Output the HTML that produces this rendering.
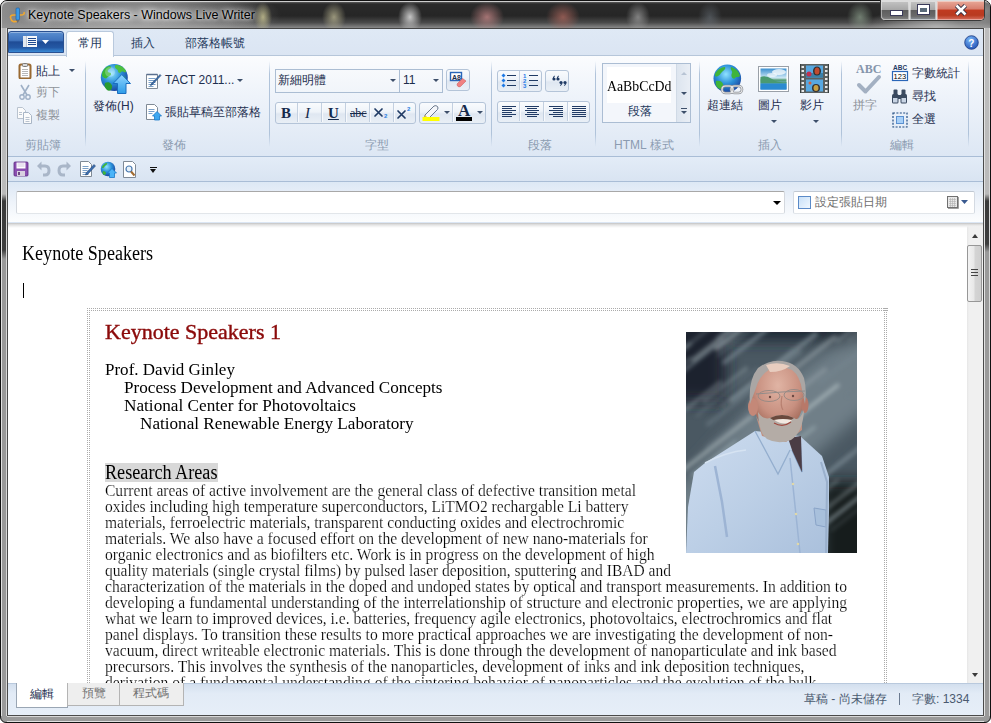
<!DOCTYPE html>
<html><head><meta charset="utf-8">
<style>
*{margin:0;padding:0;box-sizing:border-box}
html,body{width:991px;height:723px;overflow:hidden;background:#fff}
body{position:relative;font-family:"Liberation Sans",sans-serif;font-size:12px;color:#1e395b}
.a{position:absolute}
.ser{font-family:"Liberation Serif",serif}
/* frame */
#frame{left:0;top:0;width:991px;height:723px;border-radius:7px 7px 6px 6px;border:1px solid #111;background:#9a9a9a}
.fside{width:6px;top:28px;height:688px;background:linear-gradient(180deg,#bdbdbd 0,#bababa 166px,#3a3a3a 173px,#3e3e3e 222px,#9a9a9a 231px,#9a9a9a 100%)}
.fside::before{content:"";position:absolute;left:0;top:0;width:1px;height:100%;background:#e2e2e2}
.fside::after{content:"";position:absolute;right:0;top:0;width:1px;height:100%;background:#d8d8d8}
#fbot{left:7px;top:715px;width:977px;height:7px;background:linear-gradient(180deg,#4a4a4a 0,#4a4a4a 1px,#d8d8d8 1px,#d8d8d8 2px,#9a9a9a 2px,#9a9a9a 6px,#e0e0e0 6px)}
#title{left:1px;top:1px;width:989px;height:27px;border-radius:6px 6px 0 0;
 background:
 radial-gradient(9px 15px at 262px 16px,rgba(205,200,150,.8),transparent),
 radial-gradient(12px 15px at 333px 16px,rgba(190,185,150,.75),transparent),
 radial-gradient(12px 15px at 409px 16px,rgba(215,215,215,.9),transparent),
 radial-gradient(17px 15px at 486px 16px,rgba(205,140,140,.75),transparent),
 radial-gradient(17px 15px at 562px 16px,rgba(175,105,95,.75),transparent),
 radial-gradient(12px 15px at 637px 16px,rgba(175,175,175,.65),transparent),
 radial-gradient(12px 15px at 709px 16px,rgba(120,130,140,.45),transparent),
 radial-gradient(13px 15px at 859px 16px,rgba(150,170,150,.65),transparent),
 radial-gradient(70px 22px at 935px 26px,rgba(190,190,190,.8),transparent),
 radial-gradient(30px 30px at 985px 10px,rgba(160,160,160,.8),transparent),
 linear-gradient(90deg,rgba(150,150,150,.9) 0,rgba(150,150,150,.6) 40px,transparent 90px),
 radial-gradient(150px 34px at 130px 14px,rgba(200,200,200,.8),rgba(200,200,200,.3) 70%,transparent),
 linear-gradient(180deg,#c8c8c8 0,#5a5a5a 1px,#2a2a2a 3px,#262626 55%,#4a4a4a 80%,#8a8a8a 100%)}
#ttext{left:28px;top:8px;font-size:12.5px;color:#000;white-space:nowrap;text-shadow:0 0 10px rgba(255,255,255,.9),0 0 6px rgba(255,255,255,.9),0 0 3px rgba(255,255,255,.6)}
#client{left:8px;top:29px;width:975px;height:686px;background:#dbe6f4;border-top:1px solid #3c3c3c}

#tabrow{left:8px;top:29px;width:975px;height:27px;background:linear-gradient(180deg,#dfe9f5,#dbe5f3);border-bottom:1px solid #b6c6da}
#appbtn{left:8px;top:31px;width:56px;height:22px;border-radius:3px 3px 0 0;background:linear-gradient(180deg,#5a8ed0 0,#3f73bd 42%,#1f4c96 50%,#2458a4 78%,#3a8ad6 100%);border:1px solid #2a5192;box-shadow:inset 0 1px 0 rgba(255,255,255,.35)}
#tab1{left:66px;top:31px;width:48px;height:26px;border:1px solid #b9c9dd;border-bottom:none;border-radius:3px 3px 0 0;background:linear-gradient(180deg,#fff,#fbfcfe)}
.tabt{top:35px;font-size:12px;color:#1e395b;white-space:nowrap}
#ribbon{left:8px;top:56px;width:975px;height:101px;background:linear-gradient(180deg,#fbfcfe 0,#eef3fa 40%,#dde7f4 100%);border-bottom:1px solid #a9bdd6}
.sep{width:1px;top:61px;height:86px;background:linear-gradient(180deg,rgba(170,190,215,0),#b0c3da 15%,#b0c3da 85%,rgba(170,190,215,0))}
.glabel{top:137px;font-size:12px;color:#8b9bb0;white-space:nowrap}
#qat{left:8px;top:157px;width:975px;height:25px;background:linear-gradient(180deg,#e3ecf7,#d9e4f2);border-bottom:1px solid #a9bdd6}
#trow{left:8px;top:182px;width:975px;height:40px;background:linear-gradient(180deg,#dde8f5 0,#eef3fa 50%,#fcfdfe 100%)}
#tinput{left:16px;top:191px;width:769px;height:23px;background:#fff;border:1px solid;border-color:#a8a8a8 #d4d8de #e2e6ea #d4d8de;border-radius:2px}
#dbox{left:793px;top:191px;width:182px;height:23px;background:#fff;border:1px solid;border-color:#c0c8d2 #d4dae2 #e2e6ea #d4dae2;border-radius:2px}
#editor{left:8px;top:223px;width:975px;height:460px;background:#fff}
#vscroll{left:967px;top:223px;width:16px;height:460px;background:linear-gradient(90deg,#e6e6e6 0,#f0f0f0 2px,#f0f0f0 100%)}
#bbar{left:8px;top:683px;width:975px;height:32px;background:linear-gradient(180deg,#d3dfee 0,#e2ebf6 30%,#e6eef8 100%);border-top:1px solid #b9c9dd}

.t{position:absolute;font-size:12px;line-height:14px;white-space:nowrap;color:#1e2f4f}
.dis{color:#8e9399}
.arr{position:absolute;width:0;height:0;border-left:3px solid transparent;border-right:3px solid transparent;border-top:3px solid #3d4f6a}

.combo{position:absolute;height:24px;border:1px solid #abbdd3;background:linear-gradient(180deg,#f7f9fc,#f1f5fa)}
.bgrp{position:absolute;height:22px;border:1px solid #b4c4d8;border-radius:3px;background:linear-gradient(180deg,#f9fbfd 0,#eef3f9 45%,#dfe7f1 55%,#e9eff6 100%);overflow:hidden}
.bdiv{position:absolute;top:1px;width:1px;height:19px;background:#c3d0e0;box-shadow:1px 0 0 #f7f9fc}
.btn1{position:absolute;border:1px solid #b4c4d8;border-radius:3px;background:linear-gradient(180deg,#f9fbfd 0,#eef3f9 45%,#dfe7f1 55%,#e9eff6 100%)}

.el{position:absolute;font-family:"Liberation Serif",serif;line-height:1;white-space:nowrap;transform-origin:0 0}
#edclip{left:8px;top:223px;width:959px;height:460px;overflow:hidden;background:#fff}
.dots{background:conic-gradient(from 270deg at 1px 1px,#ababab 25%,transparent 0) 0 0/2px 2px}
</style></head><body>
<div id="frame" class="a"></div><div id="fbot" class="a"></div><div class="a fside" style="left:1px"></div><div class="a fside" style="left:984px;background:linear-gradient(180deg,#bdbdbd 0,#bababa 166px,#3a3a3a 173px,#3e3e3e 216px,#9a9a9a 224px,#9a9a9a 100%)"></div><div class="a" style="left:7px;top:28px;width:1px;height:688px;background:#4a4a4a"></div><div class="a" style="left:983px;top:28px;width:1px;height:688px;background:#4a4a4a"></div>
<div id="title" class="a"></div>
<div class="a" style="left:1px;top:1px;width:989px;height:27px;border-radius:6px 6px 0 0;box-shadow:inset 1px 1px 0 rgba(255,255,255,.55)"></div><div id="ttext" class="a">Keynote Speakers - Windows Live Writer</div>
<div id="client" class="a"></div>

<div id="tabrow" class="a"></div><div class="a" style="left:7px;top:28px;width:977px;height:1px;background:#454545;border-radius:2px 2px 0 0"></div>
<div id="appbtn" class="a"></div>
<div class="a tabt" style="left:131px">插入</div>
<div class="a tabt" style="left:185px">部落格帳號</div>
<div id="ribbon" class="a"></div>
<div id="tab1" class="a"></div>
<div class="a tabt" style="left:78px">常用</div>

<div class="a sep" style="left:85px"></div>
<div class="a sep" style="left:269px"></div>
<div class="a sep" style="left:491px"></div>
<div class="a sep" style="left:595px"></div>
<div class="a sep" style="left:699px"></div>
<div class="a sep" style="left:841px"></div>
<div class="a sep" style="left:968px"></div>
<div class="a glabel" style="left:25px">剪貼簿</div>
<div class="a glabel" style="left:162px">發佈</div>
<div class="a glabel" style="left:365px">字型</div>
<div class="a glabel" style="left:528px">段落</div>
<div class="a glabel" style="left:614px">HTML 樣式</div>
<div class="a glabel" style="left:758px">插入</div>
<div class="a glabel" style="left:890px">編輯</div>
<div id="qat" class="a"></div>
<div id="trow" class="a"></div>
<div id="tinput" class="a"></div>
<div id="dbox" class="a"></div>
<div id="editor" class="a"></div>

<div id="edclip" class="a"><div class="a" style="left:-8px;top:-223px;width:991px;height:723px">
<div class="a" style="left:23px;top:283px;width:1px;height:15px;background:#000"></div>
<div class="a dots" style="left:87px;top:308px;width:801px;height:4px"></div>
<div class="a dots" style="left:87px;top:308px;width:4px;height:400px"></div>
<div class="a dots" style="left:884px;top:308px;width:4px;height:400px"></div>
<div class="a" style="left:105px;top:463px;width:113px;height:19px;background:#d8d8d8"></div>
<!--ED-->
<div class="el" style="left:22.40px;top:242.63px;font-size:20.5px;color:#000;transform:scaleX(0.8824)">Keynote Speakers</div>
<div class="el" style="left:105.20px;top:321.61px;font-size:21px;color:#8b0a0a;transform:scaleX(1.0479);-webkit-text-stroke:0.4px #8b0a0a">Keynote Speakers 1</div>
<div class="el" style="left:104.70px;top:360.68px;font-size:17.7px;color:#000;transform:scaleX(0.9616)">Prof. David Ginley</div>
<div class="el" style="left:124.30px;top:378.78px;font-size:17.7px;color:#000;transform:scaleX(0.9678)">Process Development and Advanced Concepts</div>
<div class="el" style="left:124.30px;top:396.68px;font-size:17.7px;color:#000;transform:scaleX(0.9733)">National Center for Photovoltaics</div>
<div class="el" style="left:140.40px;top:414.68px;font-size:17.7px;color:#000;transform:scaleX(0.9696)">National Renewable Energy Laboratory</div>
<div class="el" style="left:104.50px;top:461.73px;font-size:20.5px;color:#000;transform:scaleX(0.8863)">Research Areas</div>
<div class="el" style="left:104.50px;top:483.40px;font-size:16px;color:#000;transform:scaleX(0.9717);-webkit-text-stroke:0.2px #fff">Current areas of active involvement are the general class of defective transition metal</div>
<div class="el" style="left:104.50px;top:499.35px;font-size:16px;color:#000;transform:scaleX(0.9720);-webkit-text-stroke:0.2px #fff">oxides including high temperature superconductors, LiTMO2 rechargable Li battery</div>
<div class="el" style="left:104.50px;top:515.30px;font-size:16px;color:#000;transform:scaleX(0.9715);-webkit-text-stroke:0.2px #fff">materials, ferroelectric materials, transparent conducting oxides and electrochromic</div>
<div class="el" style="left:104.50px;top:531.25px;font-size:16px;color:#000;transform:scaleX(0.9774);-webkit-text-stroke:0.2px #fff">materials. We also have a focused effort on the development of new nano-materials for</div>
<div class="el" style="left:104.50px;top:547.20px;font-size:16px;color:#000;transform:scaleX(0.9780);-webkit-text-stroke:0.2px #fff">organic electronics and as biofilters etc. Work is in progress on the development of high</div>
<div class="el" style="left:104.50px;top:563.15px;font-size:16px;color:#000;transform:scaleX(0.9701);-webkit-text-stroke:0.2px #fff">quality materials (single crystal films) by pulsed laser deposition, sputtering and IBAD and</div>
<div class="el" style="left:104.50px;top:579.10px;font-size:16px;color:#000;transform:scaleX(0.9766);-webkit-text-stroke:0.2px #fff">characterization of the materials in the doped and undoped states by optical and transport measurements. In addition to</div>
<div class="el" style="left:104.50px;top:595.05px;font-size:16px;color:#000;transform:scaleX(0.9761);-webkit-text-stroke:0.2px #fff">developing a fundamental understanding of the interrelationship of structure and electronic properties, we are applying</div>
<div class="el" style="left:104.50px;top:611.00px;font-size:16px;color:#000;transform:scaleX(0.9743);-webkit-text-stroke:0.2px #fff">what we learn to improved devices, i.e. batteries, frequency agile electronics, photovoltaics, electrochromics and flat</div>
<div class="el" style="left:104.50px;top:626.95px;font-size:16px;color:#000;transform:scaleX(0.9777);-webkit-text-stroke:0.2px #fff">panel displays. To transition these results to more practical approaches we are investigating the development of non-</div>
<div class="el" style="left:104.50px;top:642.90px;font-size:16px;color:#000;transform:scaleX(0.9752);-webkit-text-stroke:0.2px #fff">vacuum, direct writeable electronic materials. This is done through the development of nanoparticulate and ink based</div>
<div class="el" style="left:104.50px;top:658.85px;font-size:16px;color:#000;transform:scaleX(0.9786);-webkit-text-stroke:0.2px #fff">precursors. This involves the synthesis of the nanoparticles, development of inks and ink deposition techniques,</div>
<div class="el" style="left:104.50px;top:674.80px;font-size:16px;color:#000;transform:scaleX(0.9773);-webkit-text-stroke:0.2px #fff">derivation of a fundamental understanding of the sintering behavior of nanoparticles and the evolution of the bulk</div>
<!--/ED-->
<!--IMG--><svg class="a" style="left:686px;top:332px" width="171" height="221" viewBox="0 0 171 221">
<defs>
 <filter id="bl" x="-30%" y="-30%" width="160%" height="160%"><feGaussianBlur stdDeviation="2.2"/></filter>
 <filter id="bl0" x="-30%" y="-30%" width="160%" height="160%"><feGaussianBlur stdDeviation="8"/></filter>
 <filter id="bl3"><feGaussianBlur stdDeviation="0.7"/></filter>
 <filter id="bl4"><feGaussianBlur stdDeviation="1.5"/></filter>
 <linearGradient id="shirt" x1="0" y1="0" x2="1" y2="1"><stop offset="0" stop-color="#cddcef"/><stop offset=".5" stop-color="#bccfe6"/><stop offset="1" stop-color="#aac0dc"/></linearGradient>
 <radialGradient id="skin" cx=".5" cy=".35" r=".6"><stop offset="0" stop-color="#e0b4a4"/><stop offset=".7" stop-color="#c89080"/><stop offset="1" stop-color="#a87060"/></radialGradient>
 <clipPath id="ic"><rect width="171" height="221"/></clipPath>
</defs>
<g clip-path="url(#ic)">
<rect width="171" height="221" fill="#4a5862"/>
<g filter="url(#bl0)">
 <rect x="-20" y="-20" width="210" height="28" fill="#1c2630"/>
 <rect x="-20" y="-20" width="60" height="90" fill="#1a242e"/>
 <path d="M-20 170 L70 70 L140 20 L190 0 L190 70 L120 130 L-20 230z" fill="#6f7f88"/>
 <rect x="135" y="150" width="60" height="90" fill="#141a1f"/>
</g>
<g filter="url(#bl)">
<line x1="-1.8" y1="78.4" x2="34.3" y2="50.2" stroke="#b0bcc0" stroke-width="3.8" stroke-opacity="0.34" stroke-linecap="round"/>
<line x1="174.0" y1="33.1" x2="210.9" y2="4.2" stroke="#7a8a94" stroke-width="2.3" stroke-opacity="0.33" stroke-linecap="round"/>
<line x1="3.8" y1="-8.8" x2="43.1" y2="-39.5" stroke="#8797a0" stroke-width="4.4" stroke-opacity="0.58" stroke-linecap="round"/>
<line x1="28.2" y1="147.1" x2="62.8" y2="120.0" stroke="#8797a0" stroke-width="3.5" stroke-opacity="0.32" stroke-linecap="round"/>
<line x1="113.0" y1="178.7" x2="151.9" y2="148.3" stroke="#a8b6ba" stroke-width="2.0" stroke-opacity="0.55" stroke-linecap="round"/>
<line x1="48.0" y1="166.8" x2="91.4" y2="132.9" stroke="#9aaab0" stroke-width="3.5" stroke-opacity="0.55" stroke-linecap="round"/>
<line x1="-81.8" y1="48.1" x2="-7.4" y2="-10.0" stroke="#7a8a94" stroke-width="2.2" stroke-opacity="0.65" stroke-linecap="round"/>
<line x1="151.0" y1="9.4" x2="198.2" y2="-27.5" stroke="#8797a0" stroke-width="2.8" stroke-opacity="0.61" stroke-linecap="round"/>
<line x1="32.6" y1="23.2" x2="119.3" y2="-44.5" stroke="#6a7a84" stroke-width="3.3" stroke-opacity="0.50" stroke-linecap="round"/>
<line x1="31.0" y1="154.1" x2="72.9" y2="121.4" stroke="#a8b6ba" stroke-width="3.3" stroke-opacity="0.37" stroke-linecap="round"/>
<line x1="-14.5" y1="147.0" x2="65.2" y2="84.7" stroke="#b0bcc0" stroke-width="3.8" stroke-opacity="0.66" stroke-linecap="round"/>
<line x1="102.9" y1="172.3" x2="165.7" y2="123.3" stroke="#7a8a94" stroke-width="2.7" stroke-opacity="0.33" stroke-linecap="round"/>
<line x1="-20.6" y1="11.3" x2="15.0" y2="-16.5" stroke="#6a7a84" stroke-width="3.9" stroke-opacity="0.62" stroke-linecap="round"/>
<line x1="193.2" y1="40.9" x2="242.7" y2="2.3" stroke="#7a8a94" stroke-width="4.4" stroke-opacity="0.70" stroke-linecap="round"/>
<line x1="122.1" y1="-10.2" x2="192.2" y2="-64.9" stroke="#7a8a94" stroke-width="2.7" stroke-opacity="0.33" stroke-linecap="round"/>
<line x1="61.0" y1="187.2" x2="117.2" y2="143.3" stroke="#7a8a94" stroke-width="2.4" stroke-opacity="0.34" stroke-linecap="round"/>
<line x1="65.4" y1="70.5" x2="148.5" y2="5.5" stroke="#b0bcc0" stroke-width="4.6" stroke-opacity="0.43" stroke-linecap="round"/>
<line x1="22.1" y1="92.2" x2="114.0" y2="20.4" stroke="#8797a0" stroke-width="4.6" stroke-opacity="0.34" stroke-linecap="round"/>
<line x1="32.5" y1="-9.7" x2="116.4" y2="-75.3" stroke="#8797a0" stroke-width="1.5" stroke-opacity="0.42" stroke-linecap="round"/>
<line x1="-26.0" y1="-16.3" x2="41.2" y2="-68.8" stroke="#8797a0" stroke-width="2.8" stroke-opacity="0.61" stroke-linecap="round"/>
<line x1="112.7" y1="57.0" x2="147.6" y2="29.7" stroke="#6a7a84" stroke-width="3.9" stroke-opacity="0.66" stroke-linecap="round"/>
<line x1="35.3" y1="73.8" x2="106.8" y2="17.9" stroke="#9aaab0" stroke-width="1.9" stroke-opacity="0.39" stroke-linecap="round"/>
<line x1="145.7" y1="198.0" x2="215.1" y2="143.8" stroke="#9aaab0" stroke-width="1.9" stroke-opacity="0.30" stroke-linecap="round"/>
<line x1="-38.6" y1="45.9" x2="-5.5" y2="20.0" stroke="#8797a0" stroke-width="2.8" stroke-opacity="0.58" stroke-linecap="round"/>
<line x1="-23.6" y1="33.2" x2="30.8" y2="-9.4" stroke="#9aaab0" stroke-width="2.7" stroke-opacity="0.35" stroke-linecap="round"/>
<line x1="162.3" y1="8.5" x2="213.5" y2="-31.4" stroke="#8797a0" stroke-width="3.2" stroke-opacity="0.35" stroke-linecap="round"/>
<line x1="18.4" y1="69.3" x2="60.1" y2="36.8" stroke="#9aaab0" stroke-width="4.4" stroke-opacity="0.39" stroke-linecap="round"/>
<line x1="116.5" y1="209.2" x2="205.7" y2="139.5" stroke="#b0bcc0" stroke-width="3.9" stroke-opacity="0.43" stroke-linecap="round"/>
<line x1="28.8" y1="167.9" x2="93.0" y2="117.7" stroke="#8797a0" stroke-width="4.5" stroke-opacity="0.46" stroke-linecap="round"/>
<line x1="30.7" y1="17.1" x2="102.4" y2="-38.9" stroke="#b0bcc0" stroke-width="3.3" stroke-opacity="0.67" stroke-linecap="round"/>
<line x1="210.3" y1="147.6" x2="293.4" y2="82.7" stroke="#6a7a84" stroke-width="4.3" stroke-opacity="0.66" stroke-linecap="round"/>
<line x1="7.2" y1="27.3" x2="101.1" y2="-46.0" stroke="#a8b6ba" stroke-width="4.1" stroke-opacity="0.51" stroke-linecap="round"/>
<line x1="31.3" y1="6.3" x2="113.8" y2="-58.2" stroke="#6a7a84" stroke-width="2.7" stroke-opacity="0.74" stroke-linecap="round"/>
<line x1="139.2" y1="192.5" x2="185.0" y2="156.7" stroke="#8797a0" stroke-width="2.3" stroke-opacity="0.45" stroke-linecap="round"/>
<line x1="172.4" y1="-1.3" x2="204.1" y2="-26.0" stroke="#6a7a84" stroke-width="3.6" stroke-opacity="0.45" stroke-linecap="round"/>
<line x1="161.8" y1="64.0" x2="217.8" y2="20.3" stroke="#6a7a84" stroke-width="1.9" stroke-opacity="0.64" stroke-linecap="round"/>
<line x1="21.4" y1="115.1" x2="73.8" y2="74.1" stroke="#6a7a84" stroke-width="4.3" stroke-opacity="0.48" stroke-linecap="round"/>
<line x1="146.5" y1="-9.9" x2="188.7" y2="-42.9" stroke="#8797a0" stroke-width="4.0" stroke-opacity="0.31" stroke-linecap="round"/>
<line x1="81.7" y1="108.0" x2="151.8" y2="53.3" stroke="#b0bcc0" stroke-width="3.8" stroke-opacity="0.74" stroke-linecap="round"/>
<line x1="88.4" y1="126.4" x2="128.2" y2="95.3" stroke="#9aaab0" stroke-width="3.4" stroke-opacity="0.66" stroke-linecap="round"/>
<line x1="57.1" y1="175.4" x2="97.4" y2="143.9" stroke="#8797a0" stroke-width="4.1" stroke-opacity="0.67" stroke-linecap="round"/>
<line x1="-9.1" y1="44.0" x2="37.6" y2="7.5" stroke="#b0bcc0" stroke-width="2.5" stroke-opacity="0.45" stroke-linecap="round"/>
<line x1="133.6" y1="51.0" x2="211.8" y2="-10.1" stroke="#7a8a94" stroke-width="1.7" stroke-opacity="0.60" stroke-linecap="round"/>
<line x1="120.9" y1="157.1" x2="207.8" y2="89.2" stroke="#8797a0" stroke-width="4.4" stroke-opacity="0.54" stroke-linecap="round"/>
<line x1="6.2" y1="143.1" x2="49.3" y2="109.5" stroke="#9aaab0" stroke-width="3.0" stroke-opacity="0.65" stroke-linecap="round"/>
<line x1="-34.9" y1="42.5" x2="4.2" y2="11.9" stroke="#9aaab0" stroke-width="3.7" stroke-opacity="0.45" stroke-linecap="round"/>
<line x1="100.8" y1="67.4" x2="139.0" y2="37.5" stroke="#b0bcc0" stroke-width="4.2" stroke-opacity="0.33" stroke-linecap="round"/>
<line x1="-55.5" y1="73.2" x2="4.6" y2="26.3" stroke="#9aaab0" stroke-width="1.8" stroke-opacity="0.64" stroke-linecap="round"/>
<line x1="136.7" y1="179.4" x2="200.1" y2="129.8" stroke="#b0bcc0" stroke-width="3.6" stroke-opacity="0.39" stroke-linecap="round"/>
<line x1="38.4" y1="30.4" x2="101.9" y2="-19.2" stroke="#8797a0" stroke-width="4.3" stroke-opacity="0.61" stroke-linecap="round"/>
<line x1="215.3" y1="105.2" x2="282.1" y2="53.0" stroke="#8797a0" stroke-width="2.4" stroke-opacity="0.68" stroke-linecap="round"/>
<line x1="-39.1" y1="41.2" x2="-3.0" y2="13.0" stroke="#8797a0" stroke-width="3.0" stroke-opacity="0.49" stroke-linecap="round"/>
<line x1="-16.8" y1="50.7" x2="63.7" y2="-12.2" stroke="#6a7a84" stroke-width="1.9" stroke-opacity="0.59" stroke-linecap="round"/>
<line x1="10.8" y1="83.6" x2="71.8" y2="36.0" stroke="#6a7a84" stroke-width="2.0" stroke-opacity="0.73" stroke-linecap="round"/>
<line x1="45.4" y1="68.0" x2="129.4" y2="2.4" stroke="#8797a0" stroke-width="5.0" stroke-opacity="0.62" stroke-linecap="round"/>
</g>
<!-- shirt -->
<g filter="url(#bl3)">
<path d="M69 99 L19 131 L8 140 L2 175 L0 221 L142 221 L143 180 L143 145 L136 124 L114 104 Z" fill="url(#shirt)"/>
<path d="M29 134 L36 170 L41 205" stroke="#9db4d4" stroke-width="2.5" fill="none"/>
<path d="M19 131 Q40 120 60 118" stroke="#d6e3f2" stroke-width="1.5" fill="none"/>
<path d="M69 99 L92 142 L104 118" stroke="#94aece" stroke-width="1.3" fill="none"/>
<path d="M114 104 L116 140 L106 118" stroke="#7f9cc0" stroke-width="1.3" fill="none"/>
<path d="M102 106 L115 104 L116 140 L106 118 Z" fill="#4c3c44"/>
<path d="M104 126 L114 221" stroke="#9cb4d4" stroke-width="1.5" fill="none"/>
<circle cx="107" cy="152" r="1.3" fill="#e0d8a8"/><circle cx="110" cy="182" r="1.3" fill="#e0d8a8"/><circle cx="112" cy="212" r="1.3" fill="#e0d8a8"/>
<path d="M128 176 L140 178 L140 195 L130 193z" fill="#a8c0dc" stroke="#8aa4c8" stroke-width="1"/>
<path d="M135 130 L141 150 L140 221" stroke="#9ab0cc" stroke-width="2" fill="none"/>
</g>
<!-- head -->
<g filter="url(#bl3)">
<path d="M70 84 Q80 104 96 106 Q112 104 116 88 L116 98 L100 110 L76 104z" fill="#c09080"/>
<ellipse cx="92" cy="64" rx="26" ry="35" fill="url(#skin)"/>
<ellipse cx="67" cy="75" rx="5" ry="9" fill="#c48878"/>
<ellipse cx="119" cy="73" rx="3.5" ry="8" fill="#b87868"/>
<path d="M64 72 Q62 48 72 36 Q84 27 96 29 Q112 31 118 46 Q121 58 119 72 L116 58 Q114 44 106 38 Q96 33 86 36 Q74 42 70 56 Z" fill="#aaa6a4"/>
<path d="M80 33 Q92 29 104 34 Q96 40 84 40z" fill="#e8cdbf"/>
<path d="M72 80 Q73 102 81 107 Q92 113 105 108 Q117 100 118 78 Q113 90 108 86 Q96 80 84 86 Q77 88 72 80z" fill="#b4aca6"/>
<path d="M84 86 Q96 80 108 86 Q104 90 96 88 Q88 90 84 86z" fill="#6a4a3e"/>
<path d="M88 88 Q97 86 106 88 Q100 95 88 88z" fill="#f2e8e0"/>
<path d="M88 91 Q97 96 105 90" stroke="#a04a40" stroke-width="1.2" fill="none"/>
<path d="M70 62 L96 60 L119 59" stroke="#8a8a8a" stroke-width=".9" fill="none"/>
<ellipse cx="83" cy="64" rx="11" ry="5.5" fill="none" stroke="#9a8a84" stroke-width="1"/>
<ellipse cx="108" cy="63" rx="10" ry="5.5" fill="none" stroke="#9a8a84" stroke-width="1"/>
<circle cx="84" cy="65" r="1.2" fill="#6a4a44"/><circle cx="107" cy="64" r="1.2" fill="#6a4a44"/>
<path d="M96 64 Q94 74 97 78" stroke="#b88070" stroke-width="1.2" fill="none"/>
</g>
</g>
</svg><!--/IMG-->
</div></div>
<div id="vscroll" class="a"></div><div class="a" style="left:8px;top:223px;width:975px;height:5px;background:linear-gradient(180deg,#bfbfbf 0,#d8d8d8 1px,#efefef 3px,rgba(255,255,255,0) 5px)"></div>
<div id="bbar" class="a"></div>

<!-- clipboard group -->
<svg class="a" style="left:18px;top:63px" width="14" height="16" viewBox="0 0 14 16">
 <rect x="1.5" y="1.5" width="11" height="14" rx="1.5" fill="#f7f7f7" stroke="#9a6a32" stroke-width="2"/>
 <rect x="3" y="4" width="8" height="10" fill="#fff"/>
 <path d="M4 6.5h6M4 8.5h6M4 10.5h6M4 12.5h6" stroke="#b8b8b8" stroke-width="1"/>
 <rect x="4.5" y="0.5" width="5" height="3" rx="1" fill="#d8d8d8" stroke="#7a7a7a" stroke-width="1"/>
</svg>
<div class="t" style="left:36px;top:64px;color:#1b2c4c">貼上</div>
<div class="arr" style="left:69px;top:69px"></div>
<svg class="a" style="left:19px;top:84px" width="12" height="16" viewBox="0 0 12 16">
 <path d="M2 1 L8 11 M10 1 L4 11" stroke="#9fb0c6" stroke-width="1.6" fill="none"/>
 <circle cx="3" cy="13" r="2.2" fill="none" stroke="#9fb0c6" stroke-width="1.4"/>
 <circle cx="9" cy="13" r="2.2" fill="none" stroke="#9fb0c6" stroke-width="1.4"/>
</svg>
<div class="t dis" style="left:36px;top:85px">剪下</div>
<svg class="a" style="left:17px;top:107px" width="16" height="17" viewBox="0 0 16 17">
 <path d="M0.5 0.5h5l3 3v8h-8z" fill="#fbfbfb" stroke="#b9c3cf"/>
 <path d="M6.5 5.5h5l3 3v8h-8z" fill="#fbfbfb" stroke="#a9b6c6"/>
 <path d="M8.5 10.5h4M8.5 12.5h4M8.5 14.5h4M2 5.5h3M2 7.5h3" stroke="#b9c3cf"/>
</svg>
<div class="t dis" style="left:36px;top:108px">複製</div>

<!-- publish group -->
<svg class="a" style="left:99px;top:63px" width="33" height="32" viewBox="0 0 33 32">
 <defs>
  <radialGradient id="gl1" cx="0.4" cy="0.35" r="0.7"><stop offset="0" stop-color="#8fe3ff"/><stop offset="0.5" stop-color="#2a8fd8"/><stop offset="1" stop-color="#1a3f9a"/></radialGradient>
  <linearGradient id="ar1" x1="0" y1="0" x2="0" y2="1"><stop offset="0" stop-color="#8fd4ff"/><stop offset="1" stop-color="#2d9ce8"/></linearGradient>
 </defs>
 <circle cx="15.3" cy="14.5" r="13.5" fill="url(#gl1)"/>
 <path d="M3 12c0-4 3-8 7-9 2 0 3 1 2 2-2 1-4 2-3 4 1 1 3 0 3 2s-3 2-4 4c-1 1-3 0-4-1-1-1-1-1-1-2z" fill="#3cb838"/>
 <path d="M6 20c2-1 5-1 6 1 2 2 1 4 0 6-1 1-3 1-4 0-2-2-3-4-2-7z" fill="#2a9a30"/>
 <path d="M17 2c4 0 8 2 10 6 0 1-1 2-2 1-2-1-3 0-4 1-1 0-2-1-2-2 0-2-3-2-3-4 0-1 0-2 1-2z" fill="#4cc040"/>
 <path d="M24 13c1 0 3 1 3 3-1 1-2 1-3 0z" fill="#3cb838"/>
 <circle cx="11" cy="9" r="5" fill="#fff" opacity=".25"/>
 <path d="M22.8 11.5 L31.5 20.5 H27 V30.5 H18.5 V20.5 H14 Z" fill="url(#ar1)" stroke="#1a6ec0" stroke-width="1"/>
</svg>
<div class="t" style="left:93px;top:99px">發佈(H)</div>
<svg class="a" style="left:145px;top:72px" width="17" height="18" viewBox="0 0 17 18">
 <path d="M1.5 2.5h11v14h-11z" fill="#fff" stroke="#7f8a96"/>
 <path d="M1.5 2.5h11" stroke="#5a7090" stroke-width="1.5"/>
 <path d="M3.5 6.5h7M3.5 8.5h7M3.5 10.5h7M3.5 12.5h7M3.5 14.5h5" stroke="#7aa0c8"/>
 <path d="M6 12 L15 2.5 L16 3.5 L7 13 L5.5 13.5z" fill="#3a6eb0" stroke="#2a4a70" stroke-width=".6"/>
</svg>
<div class="t" style="left:165px;top:73px">TACT 2011...</div>
<div class="arr" style="left:237px;top:79px"></div>
<svg class="a" style="left:145px;top:103px" width="17" height="18" viewBox="0 0 17 18">
 <path d="M1.5 1.5h8l3 3v12h-11z" fill="#fff" stroke="#7f8a96"/>
 <path d="M3.5 6.5h6M3.5 8.5h6M3.5 10.5h4" stroke="#7aa0c8"/>
 <path d="M12 8.5 L16.5 13 H14.5 V17 H9.5 V13 H7.5 Z" fill="#3fa8f0" stroke="#1a78c8" stroke-width=".8"/>
</svg>
<div class="t" style="left:165px;top:105px">張貼草稿至部落格</div>

<!-- font group -->
<div class="combo" style="left:275px;top:69px;width:125px"></div>
<div class="combo" style="left:399px;top:69px;width:44px"></div>
<div class="t" style="left:278px;top:73px;color:#1b2c4c">新細明體</div>
<div class="arr" style="left:390px;top:79px"></div>
<div class="t" style="left:403px;top:73px;color:#1b2c4c">11</div>
<div class="arr" style="left:433px;top:79px"></div>
<div class="btn1" style="left:446px;top:69px;width:24px;height:22px"></div>
<svg class="a" style="left:449px;top:71px" width="18" height="17" viewBox="0 0 18 17">
 <rect x="1.5" y="1.5" width="11" height="8" fill="#fff" stroke="#2a66b8" stroke-width="1.4"/>
 <text x="3" y="8.5" font-family="Liberation Sans" font-size="7" font-weight="bold" fill="#1b2c4c">A8</text>
 <path d="M8 13 L13.5 7.5 L17 10 L11.5 15.5 Q10 16.5 8.5 15z" fill="#f08080" stroke="#d06060" stroke-width=".6"/>
</svg>
<div class="bgrp" style="left:275px;top:102px;width:141px"></div>
<div class="bdiv" style="left:297px;top:103px"></div>
<div class="bdiv" style="left:321px;top:103px"></div>
<div class="bdiv" style="left:345px;top:103px"></div>
<div class="bdiv" style="left:369px;top:103px"></div>
<div class="bdiv" style="left:393px;top:103px"></div>
<div class="t ser" style="left:281px;top:105px;font-size:15px;line-height:16px;font-weight:bold;color:#15294b">B</div>
<div class="t ser" style="left:305px;top:105px;font-size:15px;line-height:16px;font-style:italic;color:#15294b">I</div>
<div class="t ser" style="left:328px;top:105px;font-size:15px;line-height:16px;font-weight:bold;color:#15294b;text-decoration:underline">U</div>
<div class="t ser" style="left:350px;top:106px;font-size:12px;line-height:14px;color:#15294b;text-decoration:line-through">abc</div>
<svg class="a" style="left:373px;top:105px" width="18" height="16" viewBox="0 0 18 16">
 <path d="M2 4 L9 11 M9 4 L2 11" stroke="#1f3a64" stroke-width="1.7" stroke-linecap="round"/>
 <text x="11" y="13" font-family="Liberation Sans" font-size="6" font-weight="bold" fill="#2a7de0">2</text>
</svg>
<svg class="a" style="left:396px;top:104px" width="18" height="16" viewBox="0 0 18 16">
 <path d="M2 7 L9 14 M9 7 L2 14" stroke="#1f3a64" stroke-width="1.7" stroke-linecap="round"/>
 <text x="11" y="7" font-family="Liberation Sans" font-size="6" font-weight="bold" fill="#2a7de0">2</text>
</svg>
<div class="bgrp" style="left:419px;top:102px;width:67px"></div>
<div class="bdiv" style="left:452px;top:103px"></div>
<svg class="a" style="left:421px;top:104px" width="20" height="18" viewBox="0 0 20 18">
 <path d="M4 11 L13 2 Q15 1 16.5 2.5 Q17.5 4 16.5 5.5 L7.5 14.5 L3.5 15z" fill="#f4f6fa" stroke="#5a6a80" stroke-width=".9"/>
 <path d="M4 11 L7.5 14.5 L3 15.5z" fill="#e8c040"/>
 <rect x="1.5" y="13" width="17" height="4" fill="#ffff00"/>
</svg>
<div class="arr" style="left:444px;top:111px"></div>
<div class="t ser" style="left:458px;top:103px;font-size:17px;line-height:16px;font-weight:bold;color:#15294b">A</div>
<div class="a" style="left:456px;top:117px;width:16px;height:4px;background:#000"></div>
<div class="arr" style="left:477px;top:111px"></div>

<!-- paragraph group -->
<div class="bgrp" style="left:497px;top:70px;width:45px"></div>
<div class="bdiv" style="left:519px;top:71px"></div>
<div class="btn1" style="left:545px;top:70px;width:24px;height:22px"></div>
<svg class="a" style="left:497px;top:70px" width="72" height="22" viewBox="0 0 72 22">
 <g fill="#1e7ae6"><path d="M6.5 3.5l2 2-2 2-2-2z"/><path d="M6.5 8.5l2 2-2 2-2-2z"/><path d="M6.5 13.5l2 2-2 2-2-2z"/></g>
 <path d="M10 5.5h9M10 10.5h9M10 15.5h9M32 5.5h9M32 10.5h9M32 15.5h9" stroke="#1f3a64" stroke-width="1"/>
 <text x="26" y="8" font-family="Liberation Sans" font-size="6" font-weight="bold" fill="#1e7ae6">1</text>
 <text x="26" y="13" font-family="Liberation Sans" font-size="6" font-weight="bold" fill="#1e7ae6">2</text>
 <text x="26" y="18" font-family="Liberation Sans" font-size="6" font-weight="bold" fill="#1e7ae6">3</text>
 <g fill="#1f3a64">
  <circle cx="57" cy="9" r="1.6"/><path d="M55.6 8.5 Q56 6 58 5.6 L58 6.3 Q57 6.8 56.9 8z"/>
  <circle cx="61" cy="9" r="1.6"/><path d="M59.6 8.5 Q60 6 62 5.6 L62 6.3 Q61 6.8 60.9 8z"/>
  <circle cx="64" cy="12.5" r="1.6"/><path d="M65.4 13 Q65 15.5 63 15.9 L63 15.2 Q64 14.7 64.1 13.5z"/>
  <circle cx="68" cy="12.5" r="1.6"/><path d="M69.4 13 Q69 15.5 67 15.9 L67 15.2 Q68 14.7 68.1 13.5z"/>
 </g>
</svg>
<div class="bgrp" style="left:497px;top:101px;width:93px"></div>
<div class="bdiv" style="left:519px;top:102px"></div>
<div class="bdiv" style="left:543px;top:102px"></div>
<div class="bdiv" style="left:567px;top:102px"></div>
<svg class="a" style="left:497px;top:101px" width="93" height="22" viewBox="0 0 93 22">
 <g stroke="#1f3a64" stroke-width="1">
 <path d="M5 5.5h14M5 7.5h10M5 9.5h14M5 11.5h10M5 13.5h14M5 15.5h10"/>
 <path d="M28 5.5h14M30 7.5h10M28 9.5h14M30 11.5h10M28 13.5h14M30 15.5h10"/>
 <path d="M52 5.5h14M56 7.5h10M52 9.5h14M56 11.5h10M52 13.5h14M56 15.5h10"/>
 <path d="M75 5.5h14M75 7.5h14M75 9.5h14M75 11.5h14M75 13.5h14M75 15.5h14"/>
 </g>
</svg>

<!-- style gallery -->
<div class="a" style="left:602px;top:63px;width:89px;height:60px;border:1px solid #abbdd3;background:#f3f6fb"></div>
<div class="a" style="left:607px;top:67px;width:64px;height:36px;background:#fff"></div>
<div class="t ser" style="left:607px;top:78px;font-size:15px;line-height:16px;color:#000;transform:scaleX(0.92);transform-origin:0 0">AaBbCcDd</div>
<div class="t" style="left:628px;top:104px;color:#1e395b">段落</div>
<div class="a" style="left:676px;top:64px;width:14px;height:58px;background:linear-gradient(90deg,#dde5ef,#e9eef5);border-left:1px solid #d0dae6"></div>
<div class="a" style="left:681px;top:72px;width:0;height:0;border-left:3px solid transparent;border-right:3px solid transparent;border-bottom:3px solid #b8c4d4"></div>
<div class="arr" style="left:681px;top:92px"></div>
<div class="a" style="left:681px;top:108px;width:6px;height:1px;background:#3d4f6a"></div>
<div class="arr" style="left:681px;top:111px"></div>

<!-- insert group -->
<svg class="a" style="left:712px;top:64px" width="33" height="31" viewBox="0 0 33 31">
 <defs>
  <radialGradient id="gl2" cx="0.45" cy="0.35" r="0.7"><stop offset="0" stop-color="#8fe3ff"/><stop offset="0.5" stop-color="#2a8fd8"/><stop offset="1" stop-color="#1a3f9a"/></radialGradient>
 </defs>
 <circle cx="15.3" cy="14.4" r="13.8" fill="url(#gl2)"/>
 <path d="M3 10c2-4 6-7 10-7 1 2-1 3-3 5s-2 3-4 4-3 1-3-2zM4 17c3-1 6 0 7 3s-1 5-3 5c-3-1-5-4-4-8zM19 3c4 1 8 4 9 9-2 2-4 0-5 2s-5-1-3-5c1-2-2-3-1-6z" fill="#3fb43a"/>
 <g fill="none" stroke="#8a8f96" stroke-width="2.6"><rect x="10" y="22" width="11" height="7" rx="3.5"/><rect x="19" y="22" width="11" height="7" rx="3.5"/></g>
 <g fill="none" stroke="#e8e8e8" stroke-width="1.2"><rect x="10" y="22" width="11" height="7" rx="3.5"/><rect x="19" y="22" width="11" height="7" rx="3.5"/></g>
</svg>
<div class="t" style="left:707px;top:98px">超連結</div>
<svg class="a" style="left:758px;top:66px" width="31" height="26" viewBox="0 0 31 26">
 <defs>
  <linearGradient id="sky" x1="0" y1="0" x2="0" y2="1"><stop offset="0" stop-color="#3a8fd0"/><stop offset=".45" stop-color="#cfe8f5"/><stop offset=".55" stop-color="#4f9a70"/><stop offset=".7" stop-color="#6fb0c8"/><stop offset="1" stop-color="#1a7ac8"/></linearGradient>
 </defs>
 <rect x="0.5" y="0.5" width="30" height="25" fill="#fff" stroke="#9aa0a8"/>
 <rect x="2.5" y="2.5" width="26" height="21" fill="url(#sky)"/>
 <ellipse cx="21" cy="6" rx="7" ry="3" fill="#fff" opacity=".75"/>
 <ellipse cx="14" cy="9" rx="5" ry="2" fill="#fff" opacity=".6"/>
 <path d="M2.5 11 Q8 9 14 13 T28.5 16 V17.5 H2.5z" fill="#4a9a70"/>
 <rect x="2.5" y="17.5" width="26" height="6" fill="#2a8ad0"/>
</svg>
<div class="t" style="left:758px;top:98px">圖片</div>
<div class="arr" style="left:771px;top:120px"></div>
<svg class="a" style="left:800px;top:64px" width="29" height="29" viewBox="0 0 29 29">
 <rect x="0" y="0" width="29" height="29" fill="#3a4040"/>
 <rect x="1" y="0" width="27" height="29" fill="#5a6060"/>
 <rect x="6" y="1.5" width="17" height="12" fill="#58a8e0"/>
 <rect x="6" y="15.5" width="17" height="12" fill="#58a8e0"/>
 <rect x="6" y="9" width="17" height="4.5" fill="#3a80a8"/>
 <ellipse cx="17" cy="7" rx="4" ry="4.5" fill="#303030"/><ellipse cx="17" cy="7" rx="2.5" ry="3.5" fill="#c04a30"/>
 <circle cx="9" cy="10" r="2.5" fill="#c03050"/>
 <ellipse cx="16" cy="24" rx="4" ry="4" fill="#383030"/><ellipse cx="16" cy="24" rx="2.5" ry="3" fill="#c8a040"/>
 <circle cx="10" cy="19" r="1.5" fill="#d06040"/>
 <g fill="#e8e8e8"><rect x="1.5" y="2" width="2.5" height="2"/><rect x="1.5" y="6" width="2.5" height="2"/><rect x="1.5" y="10" width="2.5" height="2"/><rect x="1.5" y="14" width="2.5" height="2"/><rect x="1.5" y="18" width="2.5" height="2"/><rect x="1.5" y="22" width="2.5" height="2"/><rect x="1.5" y="26" width="2.5" height="2"/>
 <rect x="25" y="2" width="2.5" height="2"/><rect x="25" y="6" width="2.5" height="2"/><rect x="25" y="10" width="2.5" height="2"/><rect x="25" y="14" width="2.5" height="2"/><rect x="25" y="18" width="2.5" height="2"/><rect x="25" y="22" width="2.5" height="2"/><rect x="25" y="26" width="2.5" height="2"/></g>
</svg>
<div class="t" style="left:800px;top:98px">影片</div>
<div class="arr" style="left:813px;top:120px"></div>

<!-- edit group -->
<div class="t ser" style="left:856px;top:63px;font-size:12px;line-height:13px;font-weight:bold;color:#8595ab">ABC</div>
<svg class="a" style="left:856px;top:74px" width="26" height="21" viewBox="0 0 26 21">
 <path d="M3 11 L9.5 17.5 L23 3" fill="none" stroke="#a3b0c2" stroke-width="4" stroke-linecap="round" stroke-linejoin="round"/>
</svg>
<div class="t dis" style="left:853px;top:98px">拼字</div>
<svg class="a" style="left:891px;top:64px" width="18" height="18" viewBox="0 0 18 18">
 <text x="2" y="6" font-family="Liberation Sans" font-size="6.5" font-weight="bold" fill="#1f3a64">ABC</text>
 <rect x="1.5" y="7.5" width="15" height="9" fill="#fff" stroke="#2a66b8" stroke-width="1.2"/>
 <text x="2.6" y="15" font-family="Liberation Sans" font-size="7.5" fill="#000">123</text>
</svg>
<div class="t" style="left:912px;top:66px">字數統計</div>
<svg class="a" style="left:891px;top:89px" width="17" height="15" viewBox="0 0 17 15">
 <g fill="#3a4a60"><rect x="1" y="5" width="6.5" height="9.5" rx="1.5"/><rect x="9.5" y="5" width="6.5" height="9.5" rx="1.5"/><rect x="2.5" y="0.5" width="4" height="6" rx="1"/><rect x="10.5" y="0.5" width="4" height="6" rx="1"/><rect x="6" y="6" width="5" height="4"/></g>
 <g fill="#c8d4e4"><rect x="2" y="9" width="4.5" height="4.5"/><rect x="10.5" y="9" width="4.5" height="4.5"/></g>
</svg>
<div class="t" style="left:912px;top:89px">尋找</div>
<svg class="a" style="left:892px;top:112px" width="16" height="16" viewBox="0 0 16 16">
 <rect x="1" y="1" width="14" height="14" fill="none" stroke="#1f4a80" stroke-width="1.2" stroke-dasharray="2 1.4"/>
 <rect x="4.5" y="4.5" width="7" height="7" fill="#a8d0f8" stroke="#5a90d0" stroke-width="1"/>
</svg>
<div class="t" style="left:912px;top:112px">全選</div>

<!-- QAT -->
<svg class="a" style="left:13px;top:161px" width="16" height="16" viewBox="0 0 16 16">
 <rect x="1" y="1" width="14" height="14" rx="1" fill="#8a4fb0" stroke="#5a2a80" stroke-width=".8"/>
 <rect x="3.5" y="1.5" width="9" height="6" fill="#fff"/>
 <path d="M4.5 3h7M4.5 5h7" stroke="#c8b8d8" stroke-width=".8"/>
 <rect x="4" y="10" width="8" height="5" fill="#d8d0e0"/>
 <rect x="5" y="11" width="2" height="3" fill="#6a4a80"/>
</svg>
<svg class="a" style="left:36px;top:161px" width="15" height="16" viewBox="0 0 15 16">
 <path d="M4 5 H9 Q13 5 13 9.5 Q13 14 9 14 H7" fill="none" stroke="#a9b6c8" stroke-width="3"/>
 <path d="M1 5 L5.5 0.5 V9.5z" fill="#a9b6c8"/>
</svg>
<svg class="a" style="left:57px;top:161px" width="15" height="16" viewBox="0 0 15 16">
 <path d="M11 5 H6 Q2 5 2 9.5 Q2 14 6 14 H8" fill="none" stroke="#a9b6c8" stroke-width="3"/>
 <path d="M14 5 L9.5 0.5 V9.5z" fill="#a9b6c8"/>
</svg>
<svg class="a" style="left:80px;top:161px" width="16" height="16" viewBox="0 0 16 16">
 <path d="M0.5 0.5h8l3 3v12h-11z" fill="#fff" stroke="#7f8a96"/>
 <path d="M2.5 5.5h6M2.5 7.5h6M2.5 9.5h5M2.5 11.5h4M2.5 13.5h6" stroke="#7aa0c8"/>
 <path d="M6 12 L14 3.5 L15.5 5 L7.5 13.5 L5.5 14z" fill="#3a6eb0" stroke="#1f3a64" stroke-width=".5"/>
</svg>
<svg class="a" style="left:100px;top:161px" width="17" height="17" viewBox="0 0 17 17">
 <defs><radialGradient id="gl3" cx="0.4" cy="0.35" r="0.7"><stop offset="0" stop-color="#8fe3ff"/><stop offset="0.5" stop-color="#2a8fd8"/><stop offset="1" stop-color="#1a3f9a"/></radialGradient></defs>
 <circle cx="8" cy="8" r="7.3" fill="url(#gl3)"/>
 <path d="M2 6c1-2 3-4 5-4 1 1-1 2-2 3s-1 2-2 2-1 0-1-1zM3 10c2 0 3 1 3 2s-1 2-2 2c-1-1-2-2-1-4z" fill="#3fb43a"/>
 <path d="M12 7.5 L16.5 12 H14.5 V16.5 H9.5 V12 H7.5z" fill="#4ab4f8" stroke="#1a78c8" stroke-width=".8"/>
</svg>
<svg class="a" style="left:123px;top:161px" width="15" height="17" viewBox="0 0 15 17">
 <path d="M0.5 0.5h9l3 3v13h-12z" fill="#fff" stroke="#7f8a96"/>
 <circle cx="6" cy="8" r="3" fill="#e8f2fa" stroke="#4a7ab0" stroke-width="1.2"/>
 <path d="M8 10.5 L11.5 14.5" stroke="#a06a30" stroke-width="2"/>
</svg>
<div class="a" style="left:150px;top:167px;width:7px;height:1px;background:#111"></div>
<div class="a" style="left:150px;top:169px;width:0;height:0;border-left:3.5px solid transparent;border-right:3.5px solid transparent;border-top:4px solid #111"></div>

<!-- title row content -->
<div class="a" style="left:773px;top:201px;width:0;height:0;border-left:4px solid transparent;border-right:4px solid transparent;border-top:4px solid #000"></div>
<div class="a" style="left:798px;top:196px;width:13px;height:13px;border:1px solid #5a8ac8;background:linear-gradient(135deg,#c8e0f8,#f0f8ff)"></div>
<div class="t" style="left:815px;top:195px;color:#6d6d6d">設定張貼日期</div>
<svg class="a" style="left:947px;top:196px" width="22" height="13" viewBox="0 0 22 13">
 <rect x="0.5" y="0.5" width="10" height="11" fill="#e8e8e8" stroke="#707070"/>
 <path d="M2 3.5h7M2 5.5h7M2 7.5h7M2 9.5h7M3.5 2v9M5.5 2v9M7.5 2v9" stroke="#b0b0b0" stroke-width=".6"/>
 <path d="M1 12.5h10.5V1" fill="none" stroke="#a0a0a0"/>
 <path d="M14 4 H21 L17.5 8z" fill="#3a5a90"/>
</svg>

<!-- scrollbar -->
<div class="a" style="left:972px;top:234px;width:0;height:0;border-left:3.5px solid transparent;border-right:3.5px solid transparent;border-bottom:4px solid #3a3a3a"></div>
<div class="a" style="left:967px;top:245px;width:15px;height:57px;border:1px solid #979797;border-radius:2px;background:linear-gradient(90deg,#f3f3f3 0,#e8e8e8 45%,#d4d4d4 55%,#cfcfcf 100%)"></div>
<div class="a" style="left:971px;top:269px;width:7px;height:1px;background:#444;box-shadow:0 3px 0 #444,0 6px 0 #444"></div>
<div class="a" style="left:972px;top:673px;width:0;height:0;border-left:3.5px solid transparent;border-right:3.5px solid transparent;border-top:4px solid #3a3a3a"></div>
<!-- bottom tabs -->
<div class="a" style="left:16px;top:683px;width:52px;height:25px;background:#fff;border:1px solid #9aa6b4;border-top:none"></div>
<div class="a" style="left:67px;top:683px;width:53px;height:23px;background:#eeeeee;border:1px solid #b4b4b4;border-top:none"></div>
<div class="a" style="left:119px;top:683px;width:65px;height:23px;background:#eeeeee;border:1px solid #b4b4b4;border-top:none"></div>
<div class="t" style="left:30px;top:687px;color:#1e2f4f">編輯</div>
<div class="t" style="left:82px;top:686px;color:#707070">預覽</div>
<div class="t" style="left:133px;top:686px;color:#707070">程式碼</div>
<div class="t" style="left:804px;top:692px;color:#4a5a70">草稿 - 尚未儲存</div>
<div class="a" style="left:899px;top:693px;width:1px;height:12px;background:#6a7a90"></div>
<div class="t" style="left:912px;top:692px;color:#4a5a70">字數: 1334</div>
<!-- app button icon -->
<svg class="a" style="left:22px;top:35px" width="28" height="13" viewBox="0 0 28 13" shape-rendering="crispEdges">
 <rect x="1" y="1" width="14" height="11" fill="#f6f8fb"/>
 <rect x="1" y="1" width="3" height="11" fill="#e2e8f0"/>
 <rect x="4" y="1" width="1" height="11" fill="#c0c8d4"/>
 <rect x="6" y="3" width="8" height="1" fill="#1f4a90"/>
 <rect x="6" y="5" width="8" height="1" fill="#1f4a90"/>
 <rect x="6" y="7" width="8" height="1" fill="#1f4a90"/>
 <rect x="6" y="9" width="8" height="1" fill="#1f4a90"/>
 <path d="M20 5h7l-3.5 4z" fill="#fff" shape-rendering="auto"/>
</svg>
<!-- title icon -->
<svg class="a" style="left:8px;top:6px" width="18" height="18" viewBox="0 0 18 18">
 <path d="M3 13 Q1 9 6 9 L13 9 Q17 9 16 6" fill="none" stroke="#f0a830" stroke-width="1.6"/>
 <path d="M3 13 Q4 17 10 15" fill="none" stroke="#f0a830" stroke-width="1.6"/>
 <rect x="8" y="2" width="3.5" height="12" rx="1" fill="#3a9ae8" stroke="#1a5aa0" stroke-width=".6"/>
 <path d="M8 14 L9.75 17 L11.5 14z" fill="#6a6a6a"/>
</svg>
<!-- caption buttons -->
<div class="a" style="left:880px;top:0px;width:105px;height:21px;border:1px solid #3a3a3a;border-top:none;border-radius:0 0 5px 5px;overflow:hidden;background:#ddd">
 <div class="a" style="left:0;top:1px;width:28px;height:19px;border-radius:0 0 0 4px;background:linear-gradient(180deg,#c4c4c4 0,#a8a8a8 45%,#5e5e5e 50%,#6a6a6a 80%,#8a8a8a 100%);box-shadow:inset 0 0 0 1px rgba(255,255,255,.45)"></div>
 <div class="a" style="left:29px;top:1px;width:26px;height:19px;background:linear-gradient(180deg,#c4c4c4 0,#a8a8a8 45%,#5e5e5e 50%,#6a6a6a 80%,#9098a0 100%);box-shadow:inset 0 0 0 1px rgba(255,255,255,.45)"></div>
 <div class="a" style="left:56px;top:1px;width:48px;height:19px;border-radius:0 0 4px 0;background:linear-gradient(180deg,#e8a898 0,#d88070 40%,#c03a20 50%,#b83a20 75%,#d87060 100%);box-shadow:inset 0 0 0 1px rgba(255,255,255,.4)"></div>
</div>
<div class="a" style="left:891px;top:11px;width:11px;height:4px;background:#fff;outline:1px solid #3a3a5a"></div>
<div class="a" style="left:918px;top:5px;width:11px;height:9px;border:2px solid #fff;border-top-width:3px;outline:1px solid #3a3a5a;background:#5a6a7a"></div>
<svg class="a" style="left:954px;top:4px" width="14" height="12" viewBox="0 0 14 12">
 <path d="M2.5 1.5 L11.5 10.5 M11.5 1.5 L2.5 10.5" stroke="#2a2a40" stroke-width="4.4"/>
 <path d="M2.5 1.5 L11.5 10.5 M11.5 1.5 L2.5 10.5" stroke="#fff" stroke-width="2.6"/>
</svg>
<!-- help icon -->
<svg class="a" style="left:964px;top:35px" width="15" height="15" viewBox="0 0 15 15">
 <defs><radialGradient id="hg" cx=".4" cy=".3" r=".8"><stop offset="0" stop-color="#7ab8f8"/><stop offset="1" stop-color="#1a4ab0"/></radialGradient></defs>
 <circle cx="7.5" cy="7.5" r="6.8" fill="url(#hg)" stroke="#1a3a80" stroke-width=".8"/>
 <text x="4.3" y="11.5" font-family="Liberation Sans" font-size="10" font-weight="bold" fill="#fff">?</text>
</svg>
</body></html>
